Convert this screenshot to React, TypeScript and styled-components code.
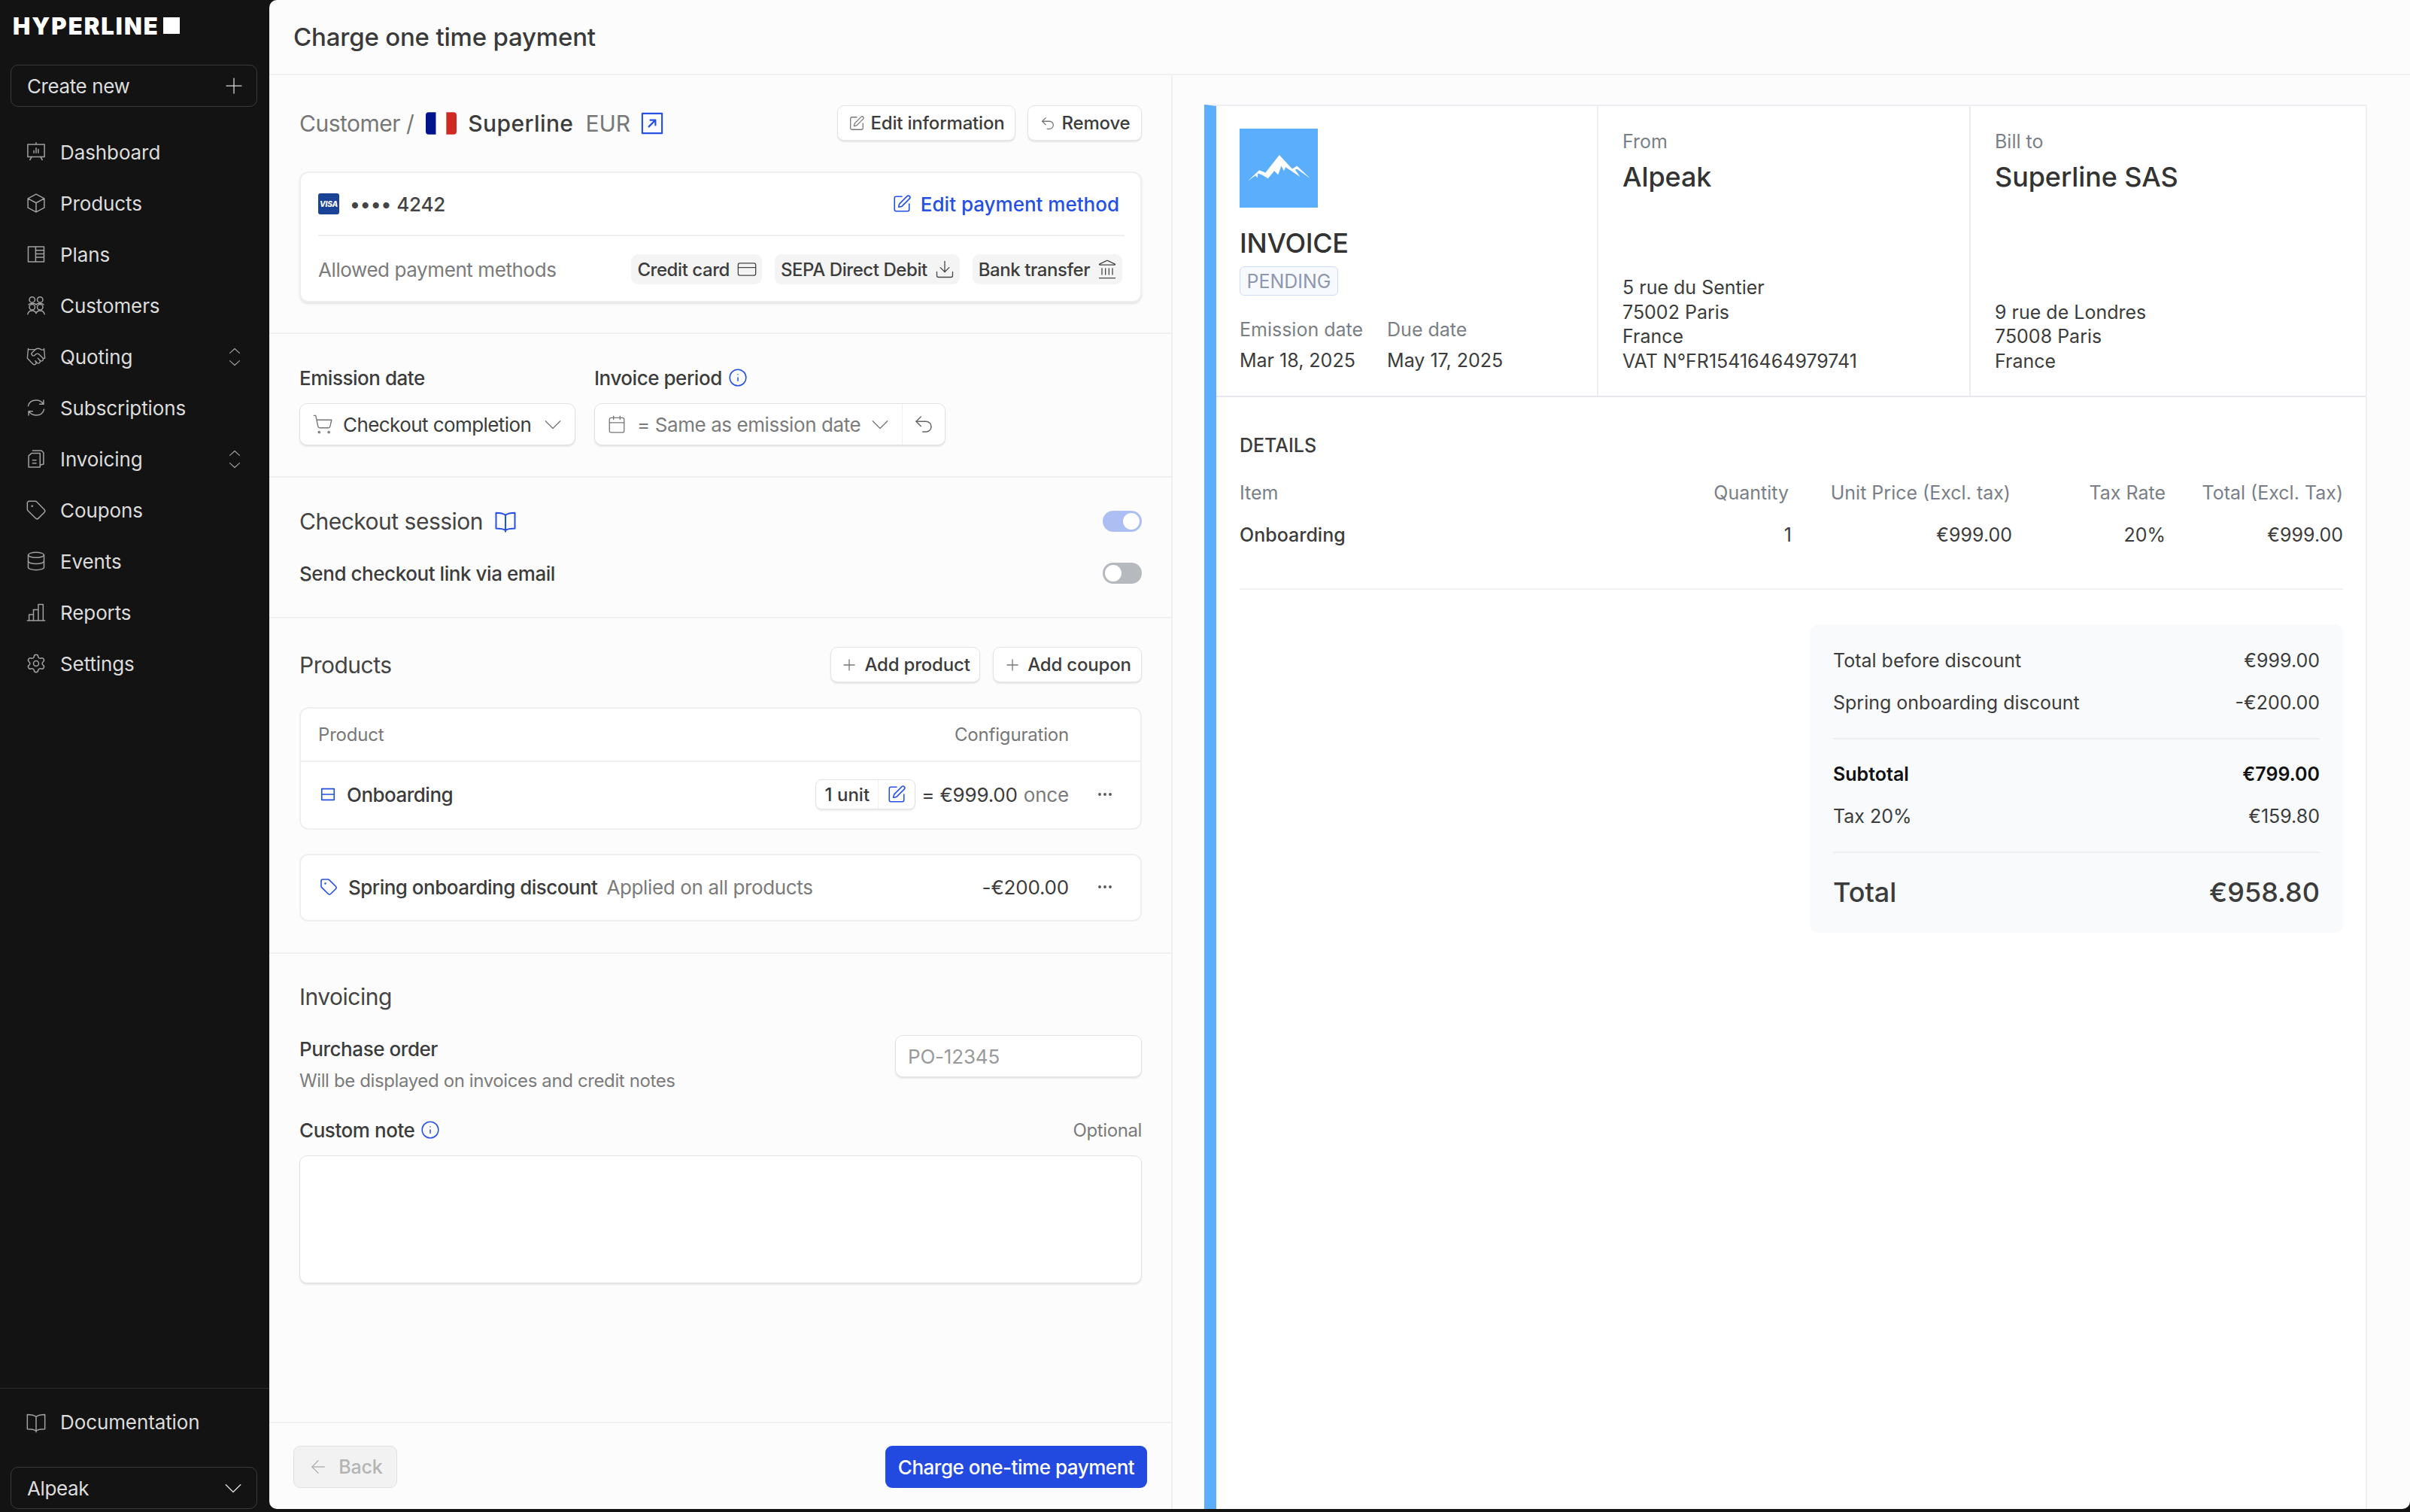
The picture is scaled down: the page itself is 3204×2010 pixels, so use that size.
import React from "react";
import styled, { createGlobalStyle } from "styled-components";
import {
  ArrowLeft, Calendar, CreditCard, Database, Download, Ellipsis, Handshake, Info,
  Landmark, Plus, Settings, ShoppingCart, SquarePen, Tag, Undo2,
} from "lucide-react";

const Global = createGlobalStyle`
  html, body { margin: 0; padding: 0; width: 3204px; height: 2010px; overflow: hidden; background: #111; }
  * { box-sizing: border-box; }
  body { font-family: Inter, "Liberation Sans", sans-serif; color: #3c3c3c; letter-spacing: -0.012em; }
  input, textarea { font-family: inherit; letter-spacing: inherit; }
`;

const Page = styled.div`display: flex; width: 3204px; height: 2010px; background: #131313;`;
const Sidebar = styled.aside`width: 358px; flex: none; display: flex; flex-direction: column; color: #dcdcdc; letter-spacing: -0.1px;`;
const Brand = styled.div`display: flex; align-items: center; gap: 5px; height: 68px; padding-left: 17px;`;
const BrandText = styled.span`font-size: 31px; font-weight: 900; color: #fff; letter-spacing: 2px; line-height: 1;`;
const BrandMark = styled.span`width: 22px; height: 22px; background: #fff;`;
const DarkBox = styled.div`
  margin: 0 16px 0 14px; height: 56px; border: 1.5px solid #3a3a3a; border-radius: 10px; display: flex;
  align-items: center; justify-content: space-between; padding: 0 18px 0 21px; font-size: 26px; letter-spacing: -0.4px;
`;
const CreateSlot = styled.div`margin-top: 18px;`;
const Nav = styled.nav`display: flex; flex-direction: column; margin-top: 26px;`;
const NavRow = styled.div`height: 68px; width: 100%; display: flex; align-items: center; padding: 0 39px 0 34px; font-size: 26px; gap: 18px;`;
const NavIcon = styled.span`width: 28px; height: 28px; flex: none; color: #a0a0a0; display: flex; align-items: center; justify-content: center;`;
const NavLabel = styled.span`flex: 1;`;
const Updown = styled.span`display: flex; flex-direction: column; color: #a0a0a0; gap: 1px;`;
const SideBottom = styled.div`margin-top: auto; border-top: 1.5px solid #2c2c2c; padding-bottom: 4px;`;
const DocSlot = styled.div`height: 89px; display: flex; align-items: center;`;
const SelectSpacer = styled.div`height: 15px;`;

const Main = styled.main`
  flex: 1; height: 2006px; background: #fcfcfc; border-radius: 10px 0 10px 10px; display: flex; flex-direction: column; overflow: hidden;
`;
const TopBar = styled.header`
  height: 100px; flex: none; display: flex; align-items: center; padding: 0 32px; border-bottom: 2px solid #efefef;
  font-size: 33px; font-weight: 500; color: #3a3a3a;
`;
const Split = styled.div`flex: 1; display: flex; min-height: 0;`;
const LeftPanel = styled.div`width: 1201px; flex: none; border-right: 2px solid #f0f0f0; display: flex; flex-direction: column;`;
const Section = styled.section<{ $pt: number; $pb: number; $fill?: boolean }>`
  padding: ${(p) => p.$pt}px 39px ${(p) => p.$pb}px 40px;
  border-bottom: 2px solid #efefef;
  ${(p) => (p.$fill ? "flex: 1;" : "")}
`;
const Between = styled.div<{ $h?: number; $mt?: number }>`
  display: flex; align-items: center; justify-content: space-between; ${(p) => (p.$h ? `height: ${p.$h}px;` : "")}
  ${(p) => (p.$mt ? `margin-top: ${p.$mt}px;` : "")}
`;
const Inline = styled.div<{ $gap?: number }>`display: flex; align-items: center; gap: ${(p) => p.$gap ?? 16}px;`;
const CustomerLine = styled.div`display: flex; align-items: center;`;
const Heading = styled.span<{ $muted?: boolean; $ml?: number; $track: number }>`
  font-size: 30px; font-weight: ${(p) => (p.$muted ? 400 : 500)}; color: ${(p) => (p.$muted ? "#777" : "#3c3c3c")};
  margin-left: ${(p) => p.$ml ?? 0}px; letter-spacing: ${(p) => p.$track}px;
`;
const FlagSlot = styled.span`margin: 0 15px 0 16px; display: flex;`;
const LightHeading = styled.span`font-size: 30px; font-weight: 400; color: #444; letter-spacing: -0.5px;`;
const InvoicingHead = styled.div`height: 38px; display: flex; align-items: center;`;
const BlueIcon = styled.span<{ $ml?: number }>`color: #2450e4; display: flex; margin-left: ${(p) => p.$ml ?? 0}px;`;
const Button = styled.div<{ $w: number }>`
  width: ${(p) => p.$w}px; height: 47px; background: #fff; border: 1.5px solid #e4e4e4; border-radius: 9px;
  box-shadow: 0 2px 2px rgba(0, 0, 0, 0.09); display: flex; align-items: center; justify-content: center; gap: 8px;
  font-size: 24px; font-weight: 450; color: #3c3c3c;
`;
const GreyIcon = styled.span`color: #777; display: flex;`;
const Card = styled.div<{ $mt: number; $h: number; $flat?: boolean }>`
  margin-top: ${(p) => p.$mt}px; height: ${(p) => p.$h}px; background: #fff; border: 2px solid #efefef; border-radius: 12px;
  ${(p) => (p.$flat ? "" : "box-shadow: 0 2px 3px rgba(0, 0, 0, 0.1);")}
`;
const PayTop = styled.div`height: 84px; margin: 0 21px 0 23px; padding-right: 7px; border-bottom: 2px solid #efefef; display: flex; align-items: center; justify-content: space-between;`;
const PayBottom = styled.div`height: 88px; padding: 0 24px 0 23px; display: flex; align-items: center; justify-content: space-between;`;
const Digits = styled.span`font-size: 26px; font-weight: 450; color: #444; margin-left: 14px;`;
const Dots = styled.span`font-size: 26px; letter-spacing: 0;`;
const BlueLink = styled.span`color: #2450e4; font-size: 26px; font-weight: 500; letter-spacing: 0;`;
const Muted = styled.span<{ $size?: number }>`font-size: ${(p) => p.$size ?? 26}px; color: #7b7b7b; letter-spacing: -0.016em;`;
const Chip = styled.span`
  height: 40px; background: #f4f4f4; border-radius: 9px; padding: 0 8px; display: flex; align-items: center; gap: 11px;
  font-size: 24px; font-weight: 450; color: #3c3c3c; letter-spacing: -0.018em;
`;
const ChipIcon = styled.span`display: flex; margin: 0 -2px; color: #444;`;
const ChipRow = styled.div`display: flex; gap: 17px;`;
const Fields = styled.div`display: flex; gap: 25px;`;
const Field = styled.div`display: flex; flex-direction: column; gap: 17px;`;
const FieldLabel = styled.div`height: 34px; display: flex; align-items: center; gap: 8px; font-size: 26px; font-weight: 450; color: #3c3c3c; letter-spacing: -0.018em;`;
const Control = styled.div<{ $w: number }>`
  width: ${(p) => p.$w}px; height: 56px; background: #fff; border: 1.5px solid #e2e2e2; border-radius: 10px;
  box-shadow: 0 2px 2px rgba(0, 0, 0, 0.09); display: flex; align-items: center; font-size: 26px; letter-spacing: -0.022em;
`;
const ControlMain = styled.div`flex: 1; display: flex; align-items: center; justify-content: space-between; padding: 0 16px 0 16px;`;
const ControlAction = styled.div`width: 57px; height: 100%; border-left: 1.5px solid #efefef; display: flex; align-items: center; justify-content: center; color: #666;`;
const Toggle = styled.div<{ $on: boolean }>`
  width: 52px; height: 28px; border-radius: 14px; padding: 3px; display: flex;
  justify-content: ${(p) => (p.$on ? "flex-end" : "flex-start")}; background: ${(p) => (p.$on ? "#adbff2" : "#b6b9bd")};
`;
const Knob = styled.span`width: 22px; height: 22px; border-radius: 50%; background: #fff;`;
const Stack = styled.div<{ $gap: number }>`display: flex; flex-direction: column; gap: ${(p) => p.$gap}px;`;
const TableHead = styled.div`height: 71px; border-bottom: 2px solid #efefef; display: flex; align-items: center; justify-content: space-between; padding: 0 95px 0 23px; font-size: 24px; color: #777;`;
const ProductRow = styled.div<{ $h: number }>`height: ${(p) => p.$h}px; display: flex; align-items: center; padding: 0 23px 0 25px; font-size: 26px;`;
const RowName = styled.span`font-weight: 450; color: #3c3c3c; margin-left: 14px; letter-spacing: -0.02em;`;
const RowNote = styled.span`color: #7b7b7b; margin-left: 12px; letter-spacing: -0.014em;`;
const Spacer = styled.div`flex: 1;`;
const UnitBox = styled.div`
  width: 133px; height: 40px; border: 1.5px solid #e2e2e2; border-radius: 8px; background: #fff; box-shadow: 0 2px 2px rgba(0, 0, 0, 0.07);
  display: flex; align-items: center; font-size: 24px; font-weight: 450; letter-spacing: 0;
`;
const UnitText = styled.span`width: 82px; text-align: center;`;
const UnitEdit = styled.span`flex: 1; height: 100%; border-left: 1.5px solid #efefef; color: #2450e4; display: flex; align-items: center; justify-content: center;`;
const Price = styled.span`margin-left: 8px; color: #3c3c3c; font-weight: 400;`;
const PriceNote = styled.span`margin-left: 8px; color: #7b7b7b;`;
const DotsSlot = styled.span`width: 48px; margin-left: 24px; display: flex; justify-content: center; color: #555;`;
const PoRow = styled.div`margin-top: 32px; display: flex; align-items: flex-start; justify-content: space-between; height: 78px;`;
const TwoLines = styled.div`display: flex; flex-direction: column; gap: 6px;`;
const LineSlot = styled.div`height: 36px; display: flex; align-items: center;`;
const Label = styled.span`font-size: 26px; font-weight: 450; color: #3c3c3c; letter-spacing: -0.017em;`;
const PoInput = styled.input`
  width: 328px; height: 56px; border: 1.5px solid #e2e2e2; border-radius: 10px; background: #fff; padding: 0 16px;
  font-size: 26px; box-shadow: 0 2px 2px rgba(0, 0, 0, 0.09); outline: none;
  &::placeholder { color: #9a9a9a; }
`;
const Note = styled.textarea`
  display: block; margin-top: 17px; width: 100%; height: 170px; border: 1.5px solid #e2e2e2; border-radius: 10px; background: #fff;
  box-shadow: 0 2px 2px rgba(0, 0, 0, 0.09); resize: none; outline: none;
`;
const Footer = styled.footer`flex: none; height: 114px; display: flex; align-items: flex-start; justify-content: space-between; padding: 30px 32px 0;`;
const BackButton = styled.div`
  width: 138px; height: 56px; border: 1.5px solid #e0e0e0; border-radius: 9px; background: #f2f2f2; color: #b4b4b4;
  display: flex; align-items: center; justify-content: center; gap: 13px; font-size: 25px; font-weight: 450;
`;
const ChargeButton = styled.div`
  width: 348px; height: 56px; border-radius: 9px; background: #2249e0; color: #fff;
  display: flex; align-items: center; justify-content: center; font-size: 26px; font-weight: 500; letter-spacing: -0.018em;
`;

const RightPanel = styled.div`flex: 1; padding: 39px 57px 0 42px; min-width: 0; letter-spacing: 0;`;
const Invoice = styled.div`height: 100%; background: #fff; border-left: 16px solid #5aaefb; border-top: 2px solid #eceef2; border-right: 2px solid #eef0f3;`;
const InvoiceTop = styled.div`height: 387px; display: grid; grid-template-columns: 506px 495px 1fr; border-bottom: 2px solid #e6e8ee;`;
const Party = styled.div<{ $line?: boolean }>`
  padding: 32px 32px 30px; display: flex; flex-direction: column; justify-content: space-between;
  ${(p) => (p.$line ? "border-left: 2px solid #eceef2;" : "")}
`;
const LogoCol = styled.div`padding: 30px 31px;`;
const LogoBox = styled.div`width: 104px; height: 105px; background: #5aaefb; display: flex; align-items: center; justify-content: center;`;
const InvoiceTitle = styled.div`margin-top: 25px; font-size: 36px; font-weight: 500; line-height: 44px; color: #333; letter-spacing: -0.3px;`;
const Pending = styled.div`
  margin-top: 9px; width: 131px; height: 39px; border: 1.5px solid #cfdcf8; border-radius: 6px; background: #f6f9fe; color: #8f97ae;
  display: flex; align-items: center; justify-content: center; font-size: 25px;
`;
const Dates = styled.div`margin-top: 30px; display: flex; gap: 32px;`;
const DateCol = styled.div`display: flex; flex-direction: column; gap: 10px;`;
const SmallGrey = styled.span`font-size: 25px; line-height: 30px; color: #7a7f87; white-space: nowrap;`;
const BodyText = styled.span`font-size: 25px; line-height: 32.5px; color: #3c3c3c; white-space: nowrap;`;
const PartyHead = styled.div`display: flex; flex-direction: column; gap: 9px;`;
const PartyName = styled.span`font-size: 36px; font-weight: 500; line-height: 46px; color: #333; letter-spacing: -0.1px;`;
const Address = styled.div`display: flex; flex-direction: column;`;
const Details = styled.div`padding: 48px 30px 0 31px;`;
const DetailsTitle = styled.div`font-size: 25px; font-weight: 500; line-height: 32px; color: #3c3c3c;`;
const ItemGrid = styled.div`
  margin-top: 19px; display: grid; grid-template-columns: 500px 234px 293px 204px 236px; grid-auto-rows: 56px; align-items: center;
  padding-bottom: 43px; border-bottom: 2px solid #f1f1f3;
`;
const HeadCell = styled.span<{ $left?: boolean; $inset?: number }>`
  font-size: 25px; color: #7a7f87; white-space: nowrap; text-align: ${(p) => (p.$left ? "left" : "right")}; padding-right: ${(p) => p.$inset ?? 0}px;
`;
const ValueCell = styled.span<{ $left?: boolean }>`
  font-size: 25px; color: #3c3c3c; white-space: nowrap; text-align: ${(p) => (p.$left ? "left" : "right")};
  font-weight: ${(p) => (p.$left ? 450 : 400)};
`;
const SummaryWrap = styled.div`display: flex; justify-content: flex-end; margin-top: 46px;`;
const Summary = styled.div`width: 709px; height: 410px; background: #f9fafb; border-radius: 12px; padding: 20px 31px;`;
const SummaryRow = styled.div<{ $strong?: boolean }>`
  height: 56px; display: flex; align-items: center; justify-content: space-between; font-size: 25px;
  color: ${(p) => (p.$strong ? "#111" : "#3c3c3c")}; font-weight: ${(p) => (p.$strong ? 600 : 400)};
`;
const SummaryRule = styled.div`height: 2px; background: #eeeff2; margin: 19px 0 18px;`;
const SummaryTotal = styled.div`height: 72px; margin-top: -2px; display: flex; align-items: center; justify-content: space-between; font-size: 36px; font-weight: 500; color: #3c3c3c;`;
const IconSvg = styled.svg`display: block; flex: none;`;

function Draw({ size = 28, sw = 1.3, children }: { size?: number; sw?: number; children: React.ReactNode }) {
  return (
    <IconSvg width={size} height={size} viewBox="0 0 24 24" fill="none" stroke="currentColor" strokeWidth={sw} strokeLinecap="round" strokeLinejoin="round">
      {children}
    </IconSvg>
  );
}
const BoardIcon = () => (
  <Draw><path d="M12 1.5V3.5M2.5 3.5H21.5V17.5H2.5ZM7 17.5L5 21M17 17.5L19 21M9.5 13V10.5M12 13V7.5M14.5 13V9" /></Draw>
);
const CubeIcon = () => (
  <Draw><path d="M12 1.8L21.3 6.7V17.3L12 22.2L2.7 17.3V6.7ZM2.7 6.7L12 11.8L21.3 6.7M12 11.8V22.2" /></Draw>
);
const PlansIcon = () => (
  <Draw><path d="M3 3.5H21V20.5H3ZM11.5 3.5V20.5M11.5 7.5H21M11.5 11.5H21M11.5 15.5H21" /></Draw>
);
const PeopleIcon = () => (
  <Draw>
    <circle cx="7.5" cy="5.5" r="3.2" /><circle cx="16.5" cy="5.5" r="3.2" /><circle cx="7.5" cy="14" r="3.2" /><circle cx="16.5" cy="14" r="3.2" />
    <path d="M2.5 22C3 19.5 5 18 7.5 18C10 18 11.5 19.5 12 21C12.5 19.5 14 18 16.5 18C19 18 21 19.5 21.5 22M3.5 11.2C4.5 10 5.8 9.7 7.5 9.7C9.8 9.7 11.3 10.2 12 11.2C12.7 10.2 14.2 9.7 16.5 9.7C18.2 9.7 19.5 10 20.5 11.2" />
  </Draw>
);
const CycleIcon = () => (
  <Draw><path d="M3 10C4 6 7.5 3.5 12 3.5C15.5 3.5 18.5 5 20.5 8M20.5 3.5V8H16M21 14C20 18 16.5 20.5 12 20.5C8.5 20.5 5.5 19 3.5 16M3.5 20.5V16H8" /></Draw>
);
const DocsIcon = () => (
  <Draw><path d="M3.5 8.5L7 5.5H16.5V21.5H3.5ZM8 2.5H18L20.5 5V18L16.5 19M8 13.5H12M8 17H12" /></Draw>
);
const BarsIcon = () => (
  <Draw><path d="M2 21.5H22M4 21.5V14.5H9V21.5M9 21.5V9H14.5V21.5M14.5 21.5V3H20V21.5" /></Draw>
);
const BookIcon = () => (
  <Draw><path d="M12 5.5C10 3.8 7 3 2 3V19.5C7 19.5 10 20 12 21.5C14 20 17 19.5 22 19.5V3C17 3 14 3.8 12 5.5ZM12 5.5V23" /></Draw>
);
const LinkSquare = () => (
  <Draw size={30} sw={1.7}><path d="M1.5 1.5H22.5V22.5H1.5ZM8.5 15.5L15.5 8.5M10 8.5H15.5V14" /></Draw>
);
const ProductGlyph = () => (
  <Draw size={22} sw={1.8}><path d="M3 4H21V20H3ZM3 12H21" /></Draw>
);
const WideChevron = ({ size = 26 }: { size?: number }) => (
  <Draw size={size} sw={1.25}><path d="M3 8L12 17L21 8" /></Draw>
);
const CrossIcon = () => (
  <Draw size={24} sw={1.25}><path d="M12 2V22M2 12H22" /></Draw>
);
const Stepper = () => (
  <Updown>
    <Draw size={14} sw={2}><path d="M1 16L12 6L23 16" /></Draw>
    <Draw size={14} sw={2}><path d="M1 8L12 18L23 8" /></Draw>
  </Updown>
);

const FlagIcon = () => (
  <IconSvg width={41} height={30} viewBox="0 0 42 30">
    <path d="M4 0H14V30H4A4 4 0 0 1 0 26V4A4 4 0 0 1 4 0Z" fill="#00148c" />
    <rect x="14" width="14" height="30" fill="#fff" />
    <path d="M28 0H38A4 4 0 0 1 42 4V26A4 4 0 0 1 38 30H28Z" fill="#cf2b24" />
  </IconSvg>
);
const VisaIcon = () => (
  <IconSvg width={28} height={28} viewBox="0 0 28 28">
    <rect width="28" height="28" rx="3" fill="#1a4296" />
    <text x="14" y="18" textAnchor="middle" fontSize="10" fontWeight="800" fontStyle="italic" fill="#fff" fontFamily="Inter, sans-serif">VISA</text>
  </IconSvg>
);
const MountainIcon = () => (
  <IconSvg width={83} height={35} viewBox="0 0 248 104">
    <polygon points="0,103 45,60 70,70 125,0 167,45 177,55 195,43 248,93 195,56 188,58 207,86 150,48 143,63 133,43 120,78 105,63 80,93 55,78 40,73 38,91 30,81" fill="#fff" />
  </IconSvg>
);

const nav: { label: string; icon: React.ReactNode; expand?: boolean }[] = [
  { label: "Dashboard", icon: <BoardIcon /> },
  { label: "Products", icon: <CubeIcon /> },
  { label: "Plans", icon: <PlansIcon /> },
  { label: "Customers", icon: <PeopleIcon /> },
  { label: "Quoting", icon: <Handshake size={32} strokeWidth={1.2} />, expand: true },
  { label: "Subscriptions", icon: <CycleIcon /> },
  { label: "Invoicing", icon: <DocsIcon />, expand: true },
  { label: "Coupons", icon: <Tag size={28} strokeWidth={1.3} /> },
  { label: "Events", icon: <Database size={28} strokeWidth={1.3} /> },
  { label: "Reports", icon: <BarsIcon /> },
  { label: "Settings", icon: <Settings size={28} strokeWidth={1.3} /> },
];

export default function App() {
  return (
    <Page>
      <Global />
      <Sidebar>
        <Brand>
          <BrandText>HYPERLINE</BrandText>
          <BrandMark />
        </Brand>
        <CreateSlot>
          <DarkBox>Create new <CrossIcon /></DarkBox>
        </CreateSlot>
        <Nav>
          {nav.map((n) => (
            <NavRow key={n.label}>
              <NavIcon>{n.icon}</NavIcon>
              <NavLabel>{n.label}</NavLabel>
              {n.expand && <Stepper />}
            </NavRow>
          ))}
        </Nav>
        <SideBottom>
          <DocSlot>
            <NavRow>
              <NavIcon><BookIcon /></NavIcon>
              <NavLabel>Documentation</NavLabel>
            </NavRow>
          </DocSlot>
          <SelectSpacer />
          <DarkBox>Alpeak <WideChevron /></DarkBox>
        </SideBottom>
      </Sidebar>
      <Main>
        <TopBar>Charge one time payment</TopBar>
        <Split>
          <LeftPanel>
            <Section $pt={40} $pb={40}>
              <Between $h={47}>
                <CustomerLine>
                  <Heading $muted $track={-0.5}>Customer /</Heading>
                  <FlagSlot><FlagIcon /></FlagSlot>
                  <Heading $track={0.4}>Superline</Heading>
                  <Heading $muted $ml={16} $track={0}>EUR</Heading>
                  <BlueIcon $ml={14}><LinkSquare /></BlueIcon>
                </CustomerLine>
                <Inline $gap={16}>
                  <Button $w={237}><GreyIcon><SquarePen size={22} strokeWidth={1.4} /></GreyIcon>Edit information</Button>
                  <Button $w={152}><GreyIcon><Undo2 size={22} strokeWidth={1.4} /></GreyIcon>Remove</Button>
                </Inline>
              </Between>
              <Card $mt={41} $h={174}>
                <PayTop>
                  <Inline $gap={0}>
                    <VisaIcon />
                    <Digits><Dots>••••</Dots> 4242</Digits>
                  </Inline>
                  <Inline $gap={12}>
                    <BlueIcon><SquarePen size={26} strokeWidth={1.5} /></BlueIcon>
                    <BlueLink>Edit payment method</BlueLink>
                  </Inline>
                </PayTop>
                <PayBottom>
                  <Muted>Allowed payment methods</Muted>
                  <ChipRow>
                    <Chip>Credit card <ChipIcon><CreditCard size={28} strokeWidth={1.1} /></ChipIcon></Chip>
                    <Chip>SEPA Direct Debit <ChipIcon><Download size={28} strokeWidth={1.1} /></ChipIcon></Chip>
                    <Chip>Bank transfer <ChipIcon><Landmark size={28} strokeWidth={1.1} /></ChipIcon></Chip>
                  </ChipRow>
                </PayBottom>
              </Card>
            </Section>
            <Section $pt={41} $pb={41}>
              <Fields>
                <Field>
                  <FieldLabel>Emission date</FieldLabel>
                  <Control $w={367}>
                    <ControlMain>
                      <Inline $gap={13}><GreyIcon><ShoppingCart size={28} strokeWidth={1.2} /></GreyIcon>Checkout completion</Inline>
                      <GreyIcon><WideChevron /></GreyIcon>
                    </ControlMain>
                  </Control>
                </Field>
                <Field>
                  <FieldLabel>Invoice period <BlueIcon><Info size={26} strokeWidth={1.4} /></BlueIcon></FieldLabel>
                  <Control $w={467}>
                    <ControlMain>
                      <Inline $gap={14}><GreyIcon><Calendar size={26} strokeWidth={1.2} /></GreyIcon><Muted>= Same as emission date</Muted></Inline>
                      <GreyIcon><WideChevron /></GreyIcon>
                    </ControlMain>
                    <ControlAction><Undo2 size={30} strokeWidth={1.2} /></ControlAction>
                  </Control>
                </Field>
              </Fields>
            </Section>
            <Section $pt={44} $pb={44}>
              <Stack $gap={41}>
                <Between $h={28}>
                  <Inline $gap={15}>
                    <LightHeading>Checkout session</LightHeading>
                    <BlueIcon><Draw size={30} sw={1.6}><path d="M12 5.5C10 3.8 7 3 2 3V19.5C7 19.5 10 20 12 21.5C14 20 17 19.5 22 19.5V3C17 3 14 3.8 12 5.5ZM12 5.5V23" /></Draw></BlueIcon>
                  </Inline>
                  <Toggle $on><Knob /></Toggle>
                </Between>
                <Between $h={28}>
                  <Label>Send checkout link via email</Label>
                  <Toggle $on={false}><Knob /></Toggle>
                </Between>
              </Stack>
            </Section>
            <Section $pt={38} $pb={41}>
              <Between $h={47}>
                <LightHeading>Products</LightHeading>
                <Inline $gap={17}>
                  <Button $w={199}><GreyIcon><Plus size={24} strokeWidth={1.3} /></GreyIcon>Add product</Button>
                  <Button $w={198}><GreyIcon><Plus size={24} strokeWidth={1.3} /></GreyIcon>Add coupon</Button>
                </Inline>
              </Between>
              <Card $mt={33} $h={163} $flat>
                <TableHead><span>Product</span><span>Configuration</span></TableHead>
                <ProductRow $h={86}>
                  <BlueIcon><ProductGlyph /></BlueIcon>
                  <RowName>Onboarding</RowName>
                  <Spacer />
                  <UnitBox>
                    <UnitText>1 unit</UnitText>
                    <UnitEdit><SquarePen size={26} strokeWidth={1.4} /></UnitEdit>
                  </UnitBox>
                  <Price>= €999.00</Price>
                  <PriceNote>once</PriceNote>
                  <DotsSlot><Ellipsis size={24} strokeWidth={1.8} /></DotsSlot>
                </ProductRow>
              </Card>
              <Card $mt={32} $h={90} $flat>
                <ProductRow $h={84}>
                  <BlueIcon><Tag size={24} strokeWidth={1.6} /></BlueIcon>
                  <RowName>Spring onboarding discount</RowName>
                  <RowNote>Applied on all products</RowNote>
                  <Spacer />
                  <Price>-€200.00</Price>
                  <DotsSlot><Ellipsis size={24} strokeWidth={1.8} /></DotsSlot>
                </ProductRow>
              </Card>
            </Section>
            <Section $pt={38} $pb={0} $fill>
              <InvoicingHead><LightHeading>Invoicing</LightHeading></InvoicingHead>
              <PoRow>
                <TwoLines>
                  <LineSlot><Label>Purchase order</Label></LineSlot>
                  <LineSlot><Muted $size={24}>Will be displayed on invoices and credit notes</Muted></LineSlot>
                </TwoLines>
                <PoInput placeholder="PO-12345" />
              </PoRow>
              <Between $h={34} $mt={31}>
                <Inline $gap={8}>
                  <Label>Custom note</Label>
                  <BlueIcon><Info size={26} strokeWidth={1.4} /></BlueIcon>
                </Inline>
                <Muted $size={24}>Optional</Muted>
              </Between>
              <Note />
            </Section>
            <Footer>
              <BackButton><ArrowLeft size={28} strokeWidth={1.3} />Back</BackButton>
              <ChargeButton>Charge one-time payment</ChargeButton>
            </Footer>
          </LeftPanel>
          <RightPanel>
            <Invoice>
              <InvoiceTop>
                <LogoCol>
                  <LogoBox><MountainIcon /></LogoBox>
                  <InvoiceTitle>INVOICE</InvoiceTitle>
                  <Pending>PENDING</Pending>
                  <Dates>
                    <DateCol><SmallGrey>Emission date</SmallGrey><BodyText>Mar 18, 2025</BodyText></DateCol>
                    <DateCol><SmallGrey>Due date</SmallGrey><BodyText>May 17, 2025</BodyText></DateCol>
                  </Dates>
                </LogoCol>
                <Party $line>
                  <PartyHead><SmallGrey>From</SmallGrey><PartyName>Alpeak</PartyName></PartyHead>
                  <Address>
                    <BodyText>5 rue du Sentier</BodyText>
                    <BodyText>75002 Paris</BodyText>
                    <BodyText>France</BodyText>
                    <BodyText>VAT N°FR15416464979741</BodyText>
                  </Address>
                </Party>
                <Party $line>
                  <PartyHead><SmallGrey>Bill to</SmallGrey><PartyName>Superline SAS</PartyName></PartyHead>
                  <Address>
                    <BodyText>9 rue de Londres</BodyText>
                    <BodyText>75008 Paris</BodyText>
                    <BodyText>France</BodyText>
                  </Address>
                </Party>
              </InvoiceTop>
              <Details>
                <DetailsTitle>DETAILS</DetailsTitle>
                <ItemGrid>
                  <HeadCell $left>Item</HeadCell>
                  <HeadCell $inset={4}>Quantity</HeadCell>
                  <HeadCell $inset={2}>Unit Price (Excl. tax)</HeadCell>
                  <HeadCell>Tax Rate</HeadCell>
                  <HeadCell>Total (Excl. Tax)</HeadCell>
                  <ValueCell $left>Onboarding</ValueCell>
                  <ValueCell>1</ValueCell>
                  <ValueCell>€999.00</ValueCell>
                  <ValueCell>20%</ValueCell>
                  <ValueCell>€999.00</ValueCell>
                </ItemGrid>
                <SummaryWrap>
                  <Summary>
                    <SummaryRow><span>Total before discount</span><span>€999.00</span></SummaryRow>
                    <SummaryRow><span>Spring onboarding discount</span><span>-€200.00</span></SummaryRow>
                    <SummaryRule />
                    <SummaryRow $strong><span>Subtotal</span><span>€799.00</span></SummaryRow>
                    <SummaryRow><span>Tax 20%</span><span>€159.80</span></SummaryRow>
                    <SummaryRule />
                    <SummaryTotal><span>Total</span><span>€958.80</span></SummaryTotal>
                  </Summary>
                </SummaryWrap>
              </Details>
            </Invoice>
          </RightPanel>
        </Split>
      </Main>
    </Page>
  );
}
